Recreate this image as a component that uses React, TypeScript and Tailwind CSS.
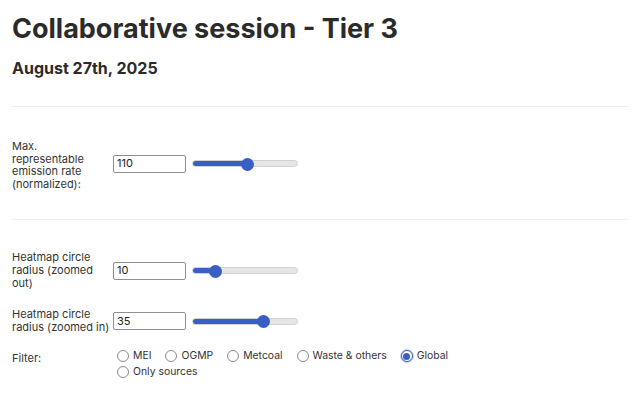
import React from "react";

function Slider({ value, min, max }: { value: number; min: number; max: number }) {
  const f = (value - min) / (max - min);
  const thumbLeft = f * (106 - 13);
  return (
    <div className="relative w-[106px] h-[14px] flex items-center">
      <div className="w-full h-[7px] rounded-full bg-[#e6e6e6] border border-[#d2d2d2] overflow-hidden">
        <div className="h-full bg-[#3a5fc4]" style={{ width: `${thumbLeft + 6}px` }} />
      </div>
      <div
        className="absolute top-[1px] w-[13px] h-[13px] rounded-full bg-[#3a5fc4]"
        style={{ left: `${thumbLeft}px` }}
      />
    </div>
  );
}

function Input({ value }: { value: string }) {
  return (
    <div className="w-[73px] h-[18px] border border-[#8f8f8f] rounded-[2px] flex items-center px-[3px] text-[11px] text-[#222] bg-white">
      {value}
    </div>
  );
}

function Radio({ label, checked }: { label: string; checked?: boolean }) {
  return (
    <div className="flex items-center gap-[4px] mr-[14px]">
      {checked ? (
        <div className="w-[12px] h-[12px] rounded-full border border-[#3a5fc4] ring-1 ring-[#c3d1f1] flex items-center justify-center bg-white">
          <div className="w-[7px] h-[7px] rounded-full bg-[#3a5fc4]" />
        </div>
      ) : (
        <div className="w-[12px] h-[12px] rounded-full border border-[#8a8a8a] bg-white" />
      )}
      <span className="text-[10.4px] leading-[16px] text-[#333]">{label}</span>
    </div>
  );
}

export default function App() {
  return (
    <div className="w-[640px] h-[400px] bg-white px-[12px] font-['Inter',sans-serif] text-[#2b2b2b] overflow-hidden">
      <h1 className="text-[27px] font-bold leading-[32px] pt-[13px]">
        Collaborative session - Tier 3
      </h1>
      <h2 className="text-[16px] font-bold leading-[20px] mt-[13px]">August 27th, 2025</h2>
      <div className="mt-[28px] h-px bg-[#eeeeee] w-[616px]" />

      <div className="mt-[33px] flex items-center text-[11px] text-[#333]">
        <div className="w-[101px] leading-[12.5px]">
          Max.
          <br />
          representable
          <br />
          emission rate
          <br />
          (normalized):
        </div>
        <div className="flex items-center gap-[6px] -mt-[3px]">
          <Input value="110" />
          <Slider value={110} min={10} max={200} />
        </div>
      </div>

      <div className="mt-[29px] h-px bg-[#eeeeee] w-[616px]" />

      <div className="mt-[31px] flex items-center text-[11px] text-[#333]">
        <div className="w-[101px] leading-[13px]">
          Heatmap circle
          <br />
          radius (zoomed
          <br />
          out)
        </div>
        <div className="flex items-center gap-[6px]">
          <Input value="10" />
          <Slider value={10} min={1} max={50} />
        </div>
      </div>

      <div className="mt-[18px] flex items-center text-[11px] text-[#333]">
        <div className="w-[101px] leading-[13px]">
          Heatmap circle
          <br />
          radius (zoomed in)
        </div>
        <div className="flex items-center gap-[6px]">
          <Input value="35" />
          <Slider value={35} min={1} max={50} />
        </div>
      </div>

      <div className="mt-[14px] flex items-start text-[11px] text-[#333]">
        <div className="w-[105px] pt-[2px]">Filter:</div>
        <div className="flex flex-wrap w-[360px] gap-y-0">
          <Radio label="MEI" />
          <Radio label="OGMP" />
          <Radio label="Metcoal" />
          <Radio label="Waste & others" />
          <Radio label="Global" checked />
          <Radio label="Only sources" />
        </div>
      </div>
    </div>
  );
}
